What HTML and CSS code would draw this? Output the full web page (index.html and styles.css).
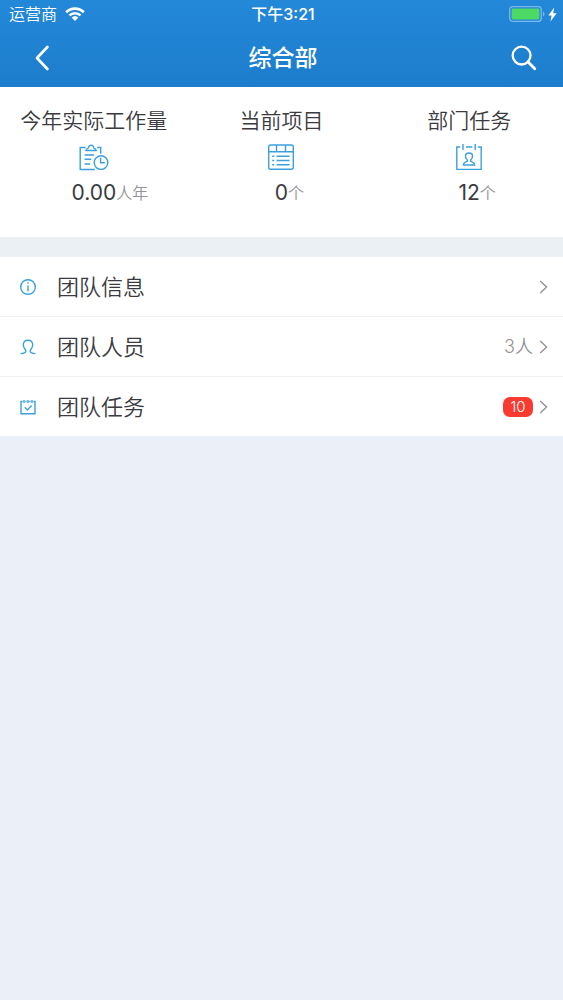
FILE: index.html
```html
<!DOCTYPE html>
<html lang="zh-CN">
<head>
<meta charset="utf-8">
<meta name="viewport" content="width=device-width, initial-scale=1">
<title>综合部</title>
<link rel="stylesheet" href="styles.css">
</head>
<body>
<header class="header">
  <div class="status">
    <div class="status-left">
      <span>运营商</span>
      <svg class="wifi" viewBox="0 0 20 15" aria-hidden="true">
        <path d="M1.2 5.2a12.6 12.6 0 0 1 17.6 0M4.4 8.4a8.2 8.2 0 0 1 11.2 0" fill="none" stroke="currentColor" stroke-width="2.6"/>
        <path d="M6.6 10.6a5 5 0 0 1 6.8 0L10 14z" fill="currentColor"/>
      </svg>
    </div>
    <time class="clock">下午3:21</time>
    <div class="status-right">
      <svg class="battery" viewBox="0 0 36 16" aria-hidden="true">
        <rect x="0.7" y="0.7" width="31.6" height="14.6" rx="3" fill="none" stroke="#7ab8ee" stroke-width="1.3"/>
        <rect x="2.6" y="2.6" width="27.8" height="10.8" rx="1.4" fill="#4cd964"/>
        <path d="M34 5.4q1.6 1 1.6 2.6T34 10.6z" fill="#7ab8ee"/>
      </svg>
      <svg class="bolt" viewBox="0 0 9 15" aria-hidden="true"><path d="M6.2 0.5 0.4 8.6h3.2L2.400 14.500 8.700 6.200H5.200z" fill="#fff"/></svg>
    </div>
  </div>
  <nav class="nav">
    <button class="nav-button back" type="button" aria-label="返回">
      <svg viewBox="0 0 14 26"><path d="M12.400 2 2 13l10.400 11" fill="none" stroke="currentColor" stroke-width="2.600" stroke-linecap="round" stroke-linejoin="round"/></svg>
    </button>
    <h1 class="title">综合部</h1>
    <button class="nav-button search" type="button" aria-label="搜索">
      <svg viewBox="0 0 26 26"><circle cx="10.600" cy="10.600" r="8.900" fill="none" stroke="currentColor" stroke-width="2.300"/><path d="m17 17 6.800 6.800" stroke="currentColor" stroke-width="2.800" stroke-linecap="round"/></svg>
    </button>
  </nav>
</header>
<main>
  <section class="stats">
    <div class="stat">
      <h2 class="stat-name">今年实际工作量</h2>
      <svg class="stat-icon" viewBox="0 0 30 28" aria-hidden="true">
        <path d="M6.600 4.500H1.200v22h14.600M18.200 4.500h3.500v6.300M7 7.500h10.200c-.4-1.800-1.400-2.300-2.400-2.600a2.700 2.700 0 1 0-5.400 0C8.400 5.200 7.400 5.700 7 7.500zM5.600 12h9.600M5.600 16.200h6.600M5.600 21h5.600"/>
        <circle cx="22" cy="19.600" r="6.800"/><path d="M21.600 14.800v5h4.200"/>
      </svg>
      <p class="stat-value"><span class="number">0.00</span><span class="unit">人年</span></p>
    </div>
    <div class="stat">
      <h2 class="stat-name">当前项目</h2>
      <svg class="stat-icon" viewBox="0 0 30 28" aria-hidden="true">
        <rect x="2.700" y="2" width="24.600" height="24.300" rx="2"/><path d="M2.700 8.800h24.600M10.500 2v6.800M19.500 2v6.800M6.200 13.200h2M10.600 13.200h13M6.200 17.500h2M10.600 17.500h13M6.200 21.700h2M10.600 21.700h13"/>
      </svg>
      <p class="stat-value"><span class="number">0</span><span class="unit">个</span></p>
    </div>
    <div class="stat">
      <h2 class="stat-name">部门任务</h2>
      <svg class="stat-icon" viewBox="0 0 30 28" aria-hidden="true">
        <path d="M6.200 4H2.800v22.400h24.400V4h-3.400M12 4h6.400M9 1v6M21.200 1v6"/>
        <path d="M13.300 17c-2.600-2.400-2.900-7 1.700-7s4.300 4.600 1.700 7v1.400c2.400.6 3.900 1.200 3.900 3.600H9.400c0-2.400 1.500-3 3.900-3.600z"/>
      </svg>
      <p class="stat-value"><span class="number">12</span><span class="unit">个</span></p>
    </div>
  </section>
  <ul class="menu">
    <li><a class="row" href="#info">
      <svg class="row-icon" viewBox="0 0 18 18" aria-hidden="true"><circle cx="9" cy="9" r="7.300"/><path d="M9 7.500v6M9 4.200v1.600"/></svg>
      <span class="label">团队信息</span>
      <svg class="chevron" viewBox="0 0 9 14" aria-hidden="true"><path d="m1.200 1 6.400 6-6.400 6"/></svg>
    </a></li>
    <li><a class="row" href="#members">
      <svg class="row-icon" viewBox="0 0 18 18" aria-hidden="true"><path d="M1.600 15.600c2.600-.2 5.300-1.200 5.300-2.700 0-1-2.600-2.600-2.600-5.800C4.300 4 6 2.200 9 2.200S13.700 4 13.700 7.100c0 3.200-2.600 4.800-2.600 5.800 0 1.500 2.700 2.500 5.300 2.700"/></svg>
      <span class="label">团队人员</span>
      <span class="count">3人</span>
      <svg class="chevron" viewBox="0 0 9 14" aria-hidden="true"><path d="m1.200 1 6.400 6-6.400 6"/></svg>
    </a></li>
    <li><a class="row" href="#tasks">
      <svg class="row-icon" viewBox="0 0 18 18" aria-hidden="true"><path d="M3.600 3.500H2v12.300h14V3.500h-1.600M6.400 3.500h1.300M10.300 3.500h1.300M5 2v3M9 2v3M13 2v3M5.800 9.300l2.600 2.600 4.200-4.300"/></svg>
      <span class="label">团队任务</span>
      <span class="badge">10</span>
      <svg class="chevron" viewBox="0 0 9 14" aria-hidden="true"><path d="m1.200 1 6.400 6-6.400 6"/></svg>
    </a></li>
  </ul>
</main>
</body>
</html>
```
FILE: styles.css
```css
* {
  box-sizing: border-box;
}

body {
  margin: 0;
  min-height: 100vh;
  background: #ebeff7;
  color: #3b3b3f;
  font-family: Inter, "Noto Sans CJK SC", sans-serif;
}

h1, h2, p, ul {
  margin: 0;
  padding: 0;
  font-weight: 400;
}

svg {
  display: block;
}

.header {
  background: linear-gradient(#2488d8, #1c7dcc);
  color: #fff;
}

.status {
  display: grid;
  grid-template-columns: 1fr auto 1fr;
  align-items: center;
  height: 28px;
  padding: 0 6px 0 9px;
  font-size: 16px;
  line-height: 28px;
}

.status-left,
.status-right {
  display: flex;
  align-items: center;
  gap: 8px;
}

.status-left {
  font-weight: 350;
}

.status-right {
  justify-content: flex-end;
  gap: 3px;
}

.clock {
  font-weight: 500;
}

.wifi {
  width: 20px;
  height: 15px;
}

.battery {
  width: 36px;
  height: 16px;
}

.bolt {
  width: 9px;
  height: 15px;
}

.nav {
  display: grid;
  grid-template-columns: 64px 1fr 64px;
  align-items: center;
  height: 59px;
  padding: 0 7px 0 10px;
}

.nav-button {
  display: grid;
  place-items: center;
  height: 44px;
  padding: 0;
  border: 0;
  background: none;
  color: #fff;
}

.back svg {
  width: 14px;
  height: 26px;
}

.search svg {
  width: 26px;
  height: 26px;
}

.title {
  font-size: 23px;
  font-weight: 500;
  line-height: 32px;
  text-align: center;
}

.stats {
  display: grid;
  grid-template-columns: repeat(3, 1fr);
  padding: 18px 0 28px;
  background: #fff;
}

.stat-name {
  font-size: 21px;
  font-weight: 350;
  line-height: 32px;
  text-align: center;
}

.stat-icon {
  width: 30px;
  height: 28px;
  margin: 6px auto;
}

.stat-icon,
.row-icon {
  fill: none;
  stroke: #3ba0de;
  stroke-width: 1.4;
}

.stat-value {
  display: grid;
  grid-template-columns: 1fr auto 1fr;
  align-items: center;
  line-height: 32px;
}

.number {
  grid-column: 2;
  font-size: 21px;
}

.unit {
  color: #939398;
  font-size: 16px;
  font-weight: 350;
}

.menu {
  border-top: 20px solid #eaf0f3;
  background: #fff;
  list-style: none;
}

.menu li + li {
  border-top: 1px solid #eeeff1;
}

.row {
  display: flex;
  align-items: center;
  height: 59px;
  padding: 0 15px 0 19px;
  color: inherit;
  line-height: 28px;
  text-decoration: none;
}

.row-icon {
  width: 18px;
  height: 18px;
  margin-right: 20px;
}

.label {
  flex: 1;
  font-size: 22px;
  font-weight: 350;
}

.count {
  color: #939398;
  font-size: 18px;
  font-weight: 350;
}

.badge {
  width: 30px;
  border-radius: 7px;
  background: #f83a30;
  color: #fff;
  font-size: 15px;
  font-weight: 300;
  line-height: 20px;
  text-align: center;
}

.chevron {
  width: 9px;
  height: 14px;
  margin-left: 6px;
  fill: none;
  stroke: #929297;
  stroke-width: 1.4;
}
```
